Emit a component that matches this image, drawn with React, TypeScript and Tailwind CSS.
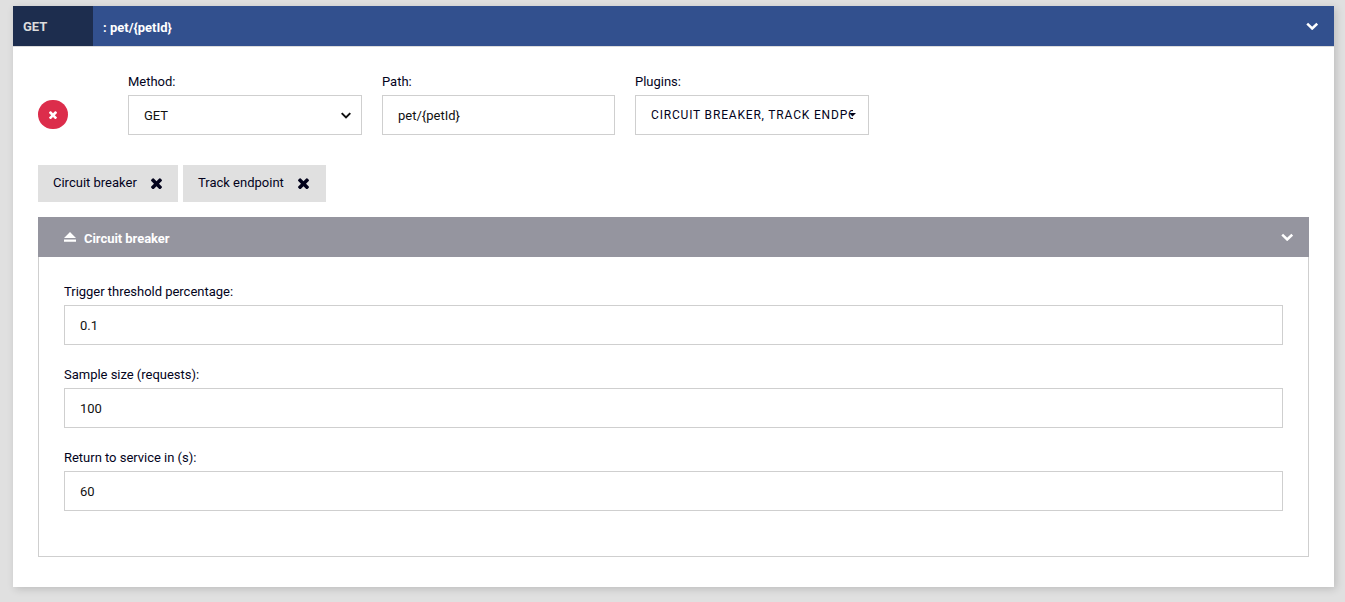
import React from 'react';

function Times({ className }: { className: string }) {
  return (
    <svg className={className} viewBox="302 302 1188 1188" fill="currentColor">
      <path d="M1490 1186q0 40-28 68l-136 136q-28 28-68 28t-68-28l-294-294-294 294q-28 28-68 28t-68-28l-136-136q-28-28-28-68t28-68l294-294-294-294q-28-28-28-68t28-68l136-136q28-28 68-28t68 28l294 294 294-294q28-28 68-28t68 28l136 136q28 28 28 68t-28 68l-294 294 294 294q28 28 28 68z" transform="translate(0 94)" />
    </svg>
  );
}

function Chevron({ className }: { className: string }) {
  return (
    <svg className={className} viewBox="0 0 12 8" fill="none" stroke="currentColor" strokeWidth="2.5">
      <path d="M1.2 1.7 6.2 6.5 11.2 1.7" />
    </svg>
  );
}

function Label({ children }: { children: React.ReactNode }) {
  return <div className="h-[23px] pt-[1px] text-[13px] leading-[18px] tracking-[-0.02px] whitespace-nowrap">{children}</div>;
}

function Box({ children }: { children: React.ReactNode }) {
  return (
    <div className="flex h-10 items-center border border-[#cfcfcf] bg-white px-[15px] pt-[2px] text-[13px] text-[#111]">
      {children}
    </div>
  );
}

function Tag({ children, className }: { children: string; className: string }) {
  return (
    <div className={`flex h-[37px] items-center justify-between bg-[#e0e0e0] pl-[15px] text-[13px] ${className}`}>
      <span className="pb-[2px]">{children}</span>
      <Times className="h-[11px] w-[11px]" />
    </div>
  );
}

const settings = [
  { label: 'Trigger threshold percentage:', value: '0.1' },
  { label: 'Sample size (requests):', value: '100' },
  { label: 'Return to service in (s):', value: '60' },
];

export default function App() {
  return (
    <div className="h-[602px] overflow-hidden bg-[#e0e0e0] pt-[6px] pr-[11px] pl-[13px] font-['Roboto',sans-serif] text-[#03031c]">
      <section className="h-[581px] bg-white shadow-[2px_2px_8px_rgba(0,0,0,0.16)]">
        <header className="flex h-[41px] border-b border-[#dcdcdc] text-[13px] font-bold">
          <div className="flex w-20 items-center bg-[#1d2d4e] pt-[1px] pl-[10px] text-[#dcdcdc]">GET</div>
          <div className="flex flex-1 items-center justify-between bg-[#32508e] pr-[16px] pl-[10px] text-white">
            <span className="pt-[3px]">: pet/&#123;petId&#125;</span>
            <Chevron className="h-2 w-3" />
          </div>
        </header>

        <div className="px-[25px] pt-[25px]">
          <div className="flex">
            <div className="w-[90px] pt-[28px]">
              <button className="flex h-[29px] w-[30px] items-center justify-center rounded-full bg-[#dc2d4b] text-white">
                <Times className="h-2 w-2" />
              </button>
            </div>
            <div className="flex gap-5">
              <div className="w-[234px]">
                <Label>Method:</Label>
                <Box>
                  <span className="flex-1">GET</span>
                  <svg className="mt-[-2px] -mr-[5px] h-[7px] w-[10px]" viewBox="0 0 10 7" fill="none" stroke="currentColor" strokeWidth="2">
                    <path d="M.7 1.1 5 5.4 9.3 1.1" />
                  </svg>
                </Box>
              </div>
              <div className="w-[233px]">
                <Label>Path:</Label>
                <Box>pet/&#123;petId&#125;</Box>
              </div>
              <div className="w-[234px]">
                <Label>Plugins:</Label>
                <Box>
                  <span className="relative mt-[-2px] w-[205px] shrink-0 text-[12px] text-[#03031c]">
                    <span className="block w-[202px] overflow-hidden tracking-[0.82px] whitespace-nowrap">
                      CIRCUIT BREAKER, TRACK ENDPO
                    </span>
                    <svg className="absolute top-[7px] right-0 h-[4px] w-[7px]" viewBox="0 0 7 4" fill="currentColor">
                      <path d="M0 0h7L3.5 3.5z" />
                    </svg>
                  </span>
                </Box>
              </div>
            </div>
          </div>

          <div className="mt-[30px] flex gap-[5px]">
            <Tag className="w-[140px] pr-4">Circuit breaker</Tag>
            <Tag className="w-[143px] pr-[17px]">Track endpoint</Tag>
          </div>

          <div className="mt-[15px] h-[340px] border border-t-0 border-[#cfcfcf]">
            <div className="-mx-px flex h-10 items-center bg-[#95959f] pr-[16px] pl-[26px] text-white">
              <svg className="h-[10px] w-3" viewBox="0 0 12 10" fill="currentColor">
                <path d="M6 0 12 6H0zM0 7.4h12v2.4H0z" />
              </svg>
              <span className="ml-2 flex-1 pt-[3px] text-[13px] font-bold tracking-[-0.05px]">Circuit breaker</span>
              <Chevron className="h-2 w-3" />
            </div>
            <div className="flex flex-col gap-5 px-[25px] pt-[25px]">
              {settings.map((s) => (
                <div key={s.label}>
                  <Label>{s.label}</Label>
                  <Box>{s.value}</Box>
                </div>
              ))}
            </div>
          </div>
        </div>
      </section>
    </div>
  );
}
